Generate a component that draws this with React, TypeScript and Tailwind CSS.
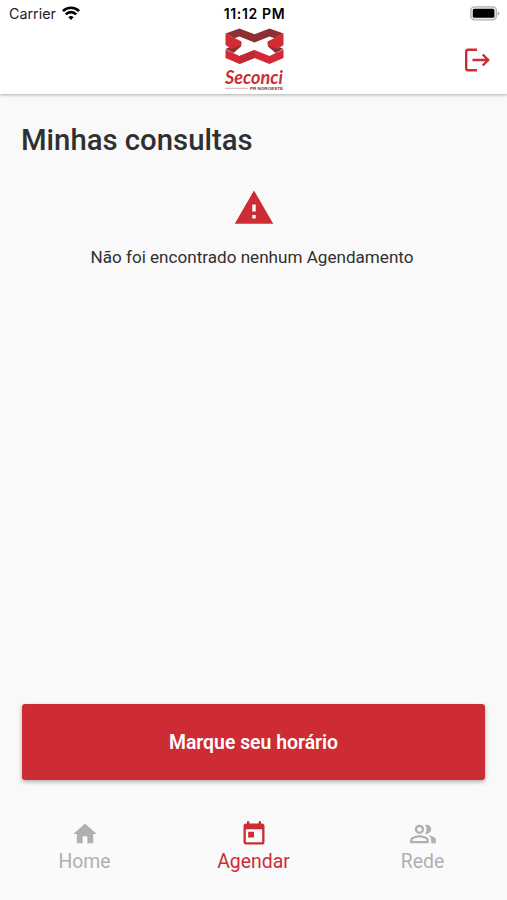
import type { ReactNode } from 'react';
import { MdHome, MdOutlinePeopleAlt, MdToday, MdWarning } from 'react-icons/md';

function StatusBar() {
  return (
    <div className="flex h-7 items-center justify-between pl-[9px] pr-[7px] font-['Inter','Liberation_Sans',sans-serif] text-black">
      <div className="flex w-[120px] items-center gap-[6px]">
        <span className="text-[14.3px] leading-none text-[#222]">Carrier</span>
        <svg width="18" height="14" viewBox="0 0 18 14" className="-mt-[2px]" fill="none" stroke="#000" strokeWidth="2.6">
          <path d="M0.9 5.1a11.4 11.4 0 0 1 16.2 0" />
          <path d="M3.8 8.3a7.3 7.3 0 0 1 10.4 0" />
          <path d="M9 14l-2.6-2.8a3.7 3.7 0 0 1 5.2 0z" fill="#000" stroke="none" />
        </svg>
      </div>
      <span className="text-[14px] font-semibold leading-none tracking-[0.65px]">11:12 PM</span>
      <div className="flex w-[120px] justify-end">
        <svg width="30" height="15" viewBox="0 0 30 15" className="-mt-[2px]">
          <rect x="0.8" y="0.8" width="25.6" height="13" rx="3.8" fill="#eee" stroke="#b0b0b0" strokeWidth="1.3" />
          <rect x="2.8" y="2.8" width="21.6" height="9" rx="1.6" fill="#000" />
          <path d="M27.8 5.2c2.2.8 2.2 3.6 0 4.4z" fill="#aaa" />
        </svg>
      </div>
    </div>
  );
}

function Logo() {
  return (
    <svg width="62" height="64" viewBox="0 0 62 64" className="overflow-visible">
      {/* upper ribbon */}
      <path d="M2.5 5.5 16.5 0.5 31.5 6.3 46.5 0.5 60.5 5.5 51.5 10.2 46.5 8.5 31.5 14.5 16.5 8.5 11.5 10.2z" fill="#8c3033" />
      {/* side folds */}
      <path d="M2.5 21 18 14V18.5L10.5 25z" fill="#8c3033" />
      <path d="M60.5 21 45 14V18.5L52.5 25z" fill="#8c3033" />
      <path d="M2.5 5.5 18.5 13.5V17L8.5 21 2.5 17z" fill="#d42a35" />
      <path d="M60.5 5.5 44.5 13.5V17L54.5 21 60.5 17z" fill="#d42a35" />
      {/* lower ribbon */}
      <path d="M2.5 21.5 16.5 28 31.5 22 46.5 28 60.5 21.5V30L46.5 36 31.5 30 16.5 36 2.5 30z" fill="#d42a35" />
      <path d="M31.5 22V30L16.5 36V28z" fill="#bf2932" />
      <text x="2" y="56.3" textLength="58" lengthAdjust="spacingAndGlyphs" fill="#cd2c35" className="font-['Lato',sans-serif] text-[18px] font-bold italic">
        Seconci
      </text>
      <path d="M2 60.3h23" stroke="#c99" strokeWidth="0.8" />
      <text x="27" y="62" textLength="33" lengthAdjust="spacingAndGlyphs" fill="#7d2a30" className="font-['Liberation_Sans',sans-serif] text-[3.8px] font-bold">
        PR NOROESTE
      </text>
    </svg>
  );
}

function TabItem({ icon, label, active }: { icon: ReactNode; label: string; active?: boolean }) {
  return (
    <button className={`flex flex-1 flex-col items-center pt-5 ${active ? 'text-[#cd2c35]' : 'text-[#b0b0b0]'}`}>
      {icon}
      <span className="mt-[2px] text-[19.4px] leading-6">{label}</span>
    </button>
  );
}

export default function App() {
  return (
    <div className="flex h-[900px] w-full flex-col overflow-hidden bg-[#f9f9f9] font-['Roboto',sans-serif] text-[#303030]">
      <header className="h-[94px] shrink-0 bg-white shadow-[0_1px_3px_rgba(0,0,0,0.3)]">
        <StatusBar />
        <div className="grid h-[66px] grid-cols-3 items-start">
          <div />
          <div className="flex justify-center">
            <Logo />
          </div>
          <button className="mr-[16px] mt-[20px] justify-self-end text-[#cd2c35]">
            <svg width="27" height="24" viewBox="0 0 27 24" fill="none" stroke="currentColor" strokeWidth="2.4">
              <path d="M13 1.7H4Q2.2 1.7 2.2 3.5V20.5Q2.2 22.3 4 22.3H13" />
              <path d="M8.5 12H24M18.7 6.5 24.2 12 18.7 17.5" />
            </svg>
          </button>
        </div>
      </header>

      <main className="flex flex-1 flex-col px-[22px]">
        <h1 className="-ml-[1px] mt-[26px] text-[29.3px] font-medium leading-10">Minhas consultas</h1>
        <div className="mt-[27px] flex flex-col items-center">
          <MdWarning size={42} className="text-[#cd2c35]" />
          <p className="mt-[16px] pr-[3px] text-[17.1px] leading-6">Não foi encontrado nenhum Agendamento</p>
        </div>
        <button className="mb-[20px] mt-auto h-[76px] rounded-[3px] bg-[#cd2c35] pt-[2px] text-[19.4px] font-semibold text-white shadow-[0_2px_4px_rgba(0,0,0,0.3)]">
          Marque seu horário
        </button>
      </main>

      <nav className="flex h-[100px] shrink-0 bg-[#fafafa]">
        <TabItem icon={<MdHome size={28} />} label="Home" />
        <TabItem icon={<MdToday size={28} />} label="Agendar" active />
        <TabItem icon={<MdOutlinePeopleAlt size={28} />} label="Rede" />
      </nav>
    </div>
  );
}
